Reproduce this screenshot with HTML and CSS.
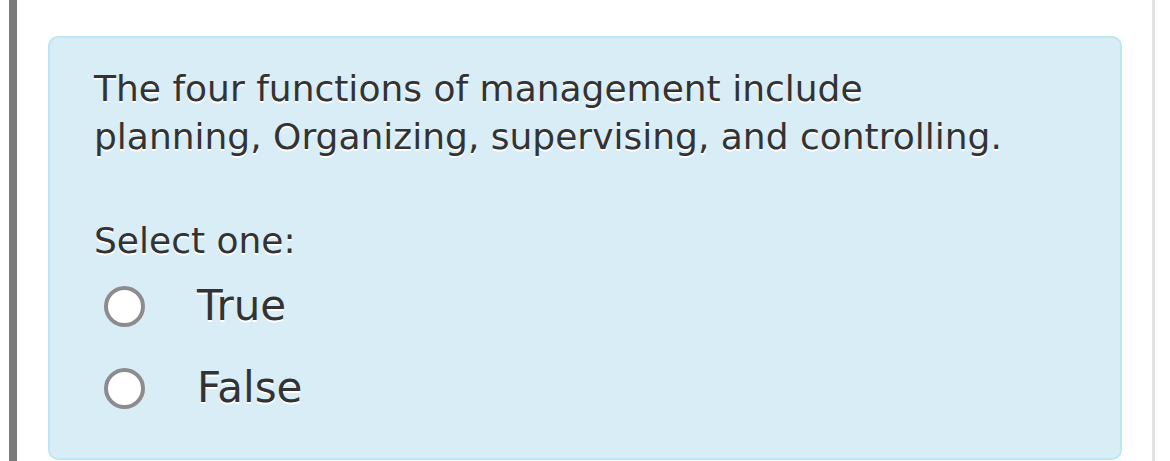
FILE: index.html
```html
<!DOCTYPE html>
<html>
<head>
<meta charset="utf-8">
<link rel="stylesheet" href="styles.css">
</head>
<body>
<div class="page">
  <div class="left-bar"></div>
  <div class="main">
    <div class="question">
      <p class="qtext">The four functions of management include planning, Organizing, supervising, and controlling.</p>
      <div class="prompt">Select one:</div>
      <div class="answers">
        <label class="option"><span class="radio"></span><span class="label">True</span></label>
        <label class="option"><span class="radio"></span><span class="label">False</span></label>
      </div>
    </div>
  </div>
  <div class="right-line"></div>
</div>
</body>
</html>
```

FILE: styles.css
```css
html, body {
  margin: 0;
  padding: 0;
  background: #ffffff;
  height: 100%;
  overflow: hidden;
}
.page {
  display: flex;
  height: 461px;
  font-family: "DejaVu Sans", Verdana, sans-serif;
  color: #333333;
}
.left-bar {
  margin-left: 9px;
  width: 8px;
  background: #7b7b7b;
  flex: none;
}
.main {
  flex: 1;
  padding: 36px 30px 0 31px;
}
.right-line {
  width: 3px;
  background: #e3e3e3;
  margin-right: 15px;
  flex: none;
}
.question {
  background: #d9edf7;
  border: 2px solid #bce8f1;
  border-radius: 10px;
  padding: 27px 44px 46px 44px;
  text-shadow: 0 2px 0 #ffffff;
}
.qtext {
  margin: 0;
  font-size: 36px;
  line-height: 48px;
  width: 940px;
}
.prompt {
  margin-top: 56px;
  font-size: 36px;
  line-height: 48px;
}
.answers {
  display: flex;
  flex-direction: column;
  gap: 34px;
  margin-top: 17px;
}
.option {
  display: flex;
  align-items: center;
  height: 48px;
}
.radio {
  width: 33px;
  height: 33px;
  border: 4px solid #8c8c8e;
  border-radius: 50%;
  background: #ffffff;
  margin-left: 10px;
  flex: none;
}
.label {
  margin-left: 52px;
  font-size: 42px;
  line-height: 48px;
}
```
